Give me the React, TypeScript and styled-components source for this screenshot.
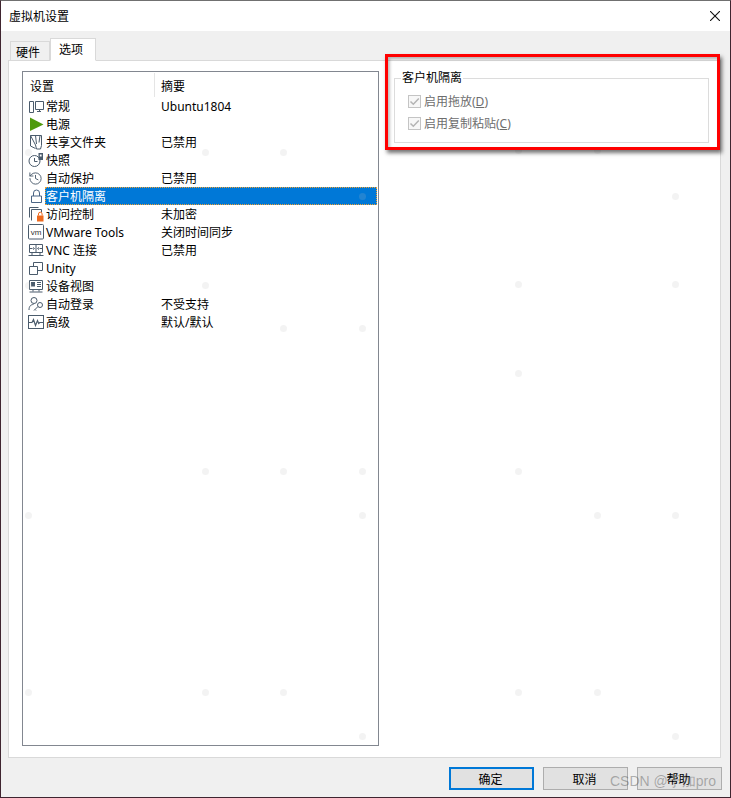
import React from "react";
import styled, { createGlobalStyle } from "styled-components";
import { History } from "lucide-react";

const GlobalStyle = createGlobalStyle`
  html, body {
    margin: 0;
    padding: 0;
    background: #fff;
  }
  * {
    box-sizing: border-box;
  }
`;

const ICON = "#4a5b6c";

const Window = styled.div`
  position: relative;
  width: 731px;
  height: 798px;
  display: flex;
  flex-direction: column;
  overflow: hidden;
  background: #f0f0f0;
  color: #000;
  font-family: "Noto Sans", "Noto Sans CJK SC", sans-serif;
  font-size: 12px;
  border: 1px solid #3f2530;
  border-top-color: #707070;
`;

const TitleBar = styled.div`
  height: 30px;
  flex: none;
  background: #fff;
  display: flex;
  align-items: center;
  justify-content: space-between;
  padding: 0 10px 1px 8px;
`;

const Body = styled.div`
  flex: 1;
  min-height: 0;
  display: flex;
  flex-direction: column;
  padding: 7px 9px 0 7px;
`;

const TabStrip = styled.div`
  height: 23px;
  flex: none;
  display: flex;
  align-items: flex-end;
  padding-left: 2px;
  margin-bottom: -1px;
  position: relative;
  z-index: 1;
`;

const Tab = styled.div<{ $active?: boolean }>`
  height: ${(p) => (p.$active ? "23px" : "20px")};
  width: ${(p) => (p.$active ? "46px" : "40px")};
  display: flex;
  align-items: center;
  justify-content: center;
  padding: ${(p) => (p.$active ? "0 4px 2px 0" : "1px 4px 0 0")};
  background: ${(p) => (p.$active ? "#fff" : "#f0f0f0")};
  border: 1px solid #d9d9d9;
  border-bottom-color: ${(p) => (p.$active ? "#fff" : "#d9d9d9")};
`;

const Panel = styled.div`
  flex: 1;
  min-height: 0;
  display: flex;
  align-items: flex-start;
  gap: 15px;
  background: #fff;
  border: 1px solid #d9d9d9;
  padding: 10px 10px 11px 13px;
`;

const SettingsList = styled.div`
  width: 357px;
  align-self: stretch;
  flex: none;
  border: 1px solid #828790;
  background: #fff;
  padding-top: 1px;
`;

const ListHeader = styled.div`
  height: 24px;
  display: flex;
`;

const HeaderCell = styled.div<{ $width?: number }>`
  width: ${(p) => (p.$width ? `${p.$width}px` : "auto")};
  flex: ${(p) => (p.$width ? "none" : "1")};
  display: flex;
  align-items: center;
  padding-left: ${(p) => (p.$width ? "7px" : "6px")};
  padding-top: 1px;
  border-right: ${(p) => (p.$width ? "1px solid #e5e5e5" : "none")};
`;

const Row = styled.div`
  height: 18px;
  display: flex;
  align-items: center;
  padding: 0 1px 0 5px;
`;

const RowIcon = styled.span`
  width: 17px;
  height: 16px;
  flex: none;
  display: flex;
  align-items: center;
  justify-content: flex-start;
`;

const RowBody = styled.div<{ $selected?: boolean }>`
  flex: 1;
  height: 18px;
  display: flex;
  align-items: center;
  background: ${(p) => (p.$selected ? "#0078d7" : "transparent")};
  color: ${(p) => (p.$selected ? "#fff" : "#000")};
  outline: ${(p) => (p.$selected ? "1px dotted #f0a030" : "none")};
  outline-offset: -1px;
`;

const RowName = styled.span`
  width: 116px;
  flex: none;
  padding-left: 1px;
  white-space: nowrap;
`;

const RowSummary = styled.span`
  white-space: nowrap;
`;

const GroupBox = styled.fieldset`
  width: 315px;
  height: 72px;
  flex: none;
  margin: 0;
  padding: 5px 0 0 13px;
  border: 1px solid #dcdcdc;
  display: block;
`;

const GroupLegend = styled.legend`
  margin-left: -7px;
  padding: 0 1px;
  line-height: 14px;
  font-size: 12px;
`;

const CheckRow = styled.div`
  height: 22px;
  display: flex;
  align-items: center;
  gap: 3px;
  color: #6d6d6d;
`;

const CheckBox = styled.span`
  width: 13px;
  height: 13px;
  flex: none;
  border: 1px solid #c4c4c4;
  background: #f7f7f7;
  display: flex;
  align-items: center;
  justify-content: center;
`;

const Accel = styled.span`
  text-decoration: underline;
`;

const Footer = styled.div`
  height: 39px;
  flex: none;
  display: flex;
  justify-content: flex-end;
  align-items: flex-start;
  gap: 9px;
  padding: 9px 8px 0 0;
`;

const Button = styled.button<{ $primary?: boolean }>`
  width: 85px;
  height: 23px;
  padding: 1px 2px 0 0;
  font: inherit;
  color: #000;
  background: #e1e1e1;
  border: ${(p) => (p.$primary ? "2px solid #0078d7" : "1px solid #adadad")};
`;

const Highlight = styled.div`
  position: absolute;
  left: 385px;
  top: 54px;
  width: 335px;
  height: 96px;
  border: 3px solid #ff0000;
  box-shadow: 2px 3px 4px rgba(0, 0, 0, 0.55), inset 2px 2px 3px rgba(0, 0, 0, 0.25);
  pointer-events: none;
`;

const Watermark = styled.div`
  position: absolute;
  left: 610px;
  top: 772px;
  font-family: "Liberation Sans", sans-serif;
  font-size: 14px;
  line-height: 18px;
  white-space: nowrap;
  color: rgba(90, 90, 90, 0.45);
  pointer-events: none;
`;

const Dot = styled.i`
  position: absolute;
  width: 7px;
  height: 7px;
  border-radius: 50%;
  background: rgba(190, 190, 190, 0.18);
  pointer-events: none;
`;

const Svg = ({ children }: { children: React.ReactNode }) => (
  <svg width="16" height="16" viewBox="0 0 16 16" fill="none" stroke={ICON} strokeWidth="1">
    {children}
  </svg>
);

const GeneralIcon = () => (
  <Svg>
    <path d="M1.5 3.5h4v11h-4zM7.5 3.5h8v8h-8zM9 13.5h4M11.5 11.5v2" />
  </Svg>
);

const PowerIcon = () => (
  <Svg>
    <path d="M2 1.5L15.5 8.5L2 15z" fill="#4f9a0c" stroke="none" />
  </Svg>
);

const FolderIcon = () => (
  <Svg>
    <path d="M2.5 1.5h11v10l-1 3.5h-4l-1-4zM2.5 1.5v10.5l5 2.5M7.5 1.5l1 8.5M12 1.5l-1 7" />
  </Svg>
);

const SnapshotIcon = () => (
  <Svg>
    <circle cx="6.5" cy="9" r="5.5" />
    <path d="M6.5 6v3.5h3" />
    <rect x="10.5" y="1" width="4.5" height="7" fill={ICON} stroke="none" />
    <rect x="11.8" y="2.5" width="1.8" height="2" fill="#fff" stroke="none" />
  </Svg>
);

const LockIcon = () => (
  <Svg>
    <path d="M3.5 8h10v6.5h-10zM5.5 8V5a3 3 0 0 1 6 0v3" stroke="#4b6585" />
  </Svg>
);

const AccessIcon = () => (
  <Svg>
    <path d="M1.5 11.5v-10h9M3.5 14.5v-11h10v3" />
    <rect x="9" y="9.5" width="6.5" height="6" fill="#ee6a1f" stroke="none" />
    <path d="M10.5 9.5V8a1.8 1.8 0 0 1 3.6 0v1.5" stroke="#ee6a1f" />
  </Svg>
);

const VmIcon = () => (
  <Svg>
    <rect x="0.5" y="0.5" width="15" height="14.5" rx="1" />
    <text x="8" y="10.5" textAnchor="middle" fontSize="8" stroke="none" fill="#333" fontFamily="Liberation Sans">
      vm
    </text>
  </Svg>
);

const VncIcon = () => (
  <Svg>
    <path d="M1.5 2.5h13v8h-13zM0.5 13.5h15M8 2.5v8M1.5 6.5h3M11.5 6.5h3M5 5.5l1.5 1-1.5 1M11 5.5l-1.5 1 1.5 1M4 10.5v3M12 10.5v3" />
  </Svg>
);

const UnityIcon = () => (
  <Svg>
    <path d="M1.5 6.5h8v8h-8zM5.5 6.5v-4h9v8h-5" />
  </Svg>
);

const DeviceIcon = () => (
  <Svg>
    <path d="M1.5 2.5h13v9h-13zM5 11.5v2M11 11.5v2M1.5 14h13" />
    <rect x="3" y="4" width="4" height="4.5" fill={ICON} stroke="none" />
    <path d="M9 4.5h4M9 6.5h4M9 8.5h4" />
  </Svg>
);

const LoginIcon = () => (
  <Svg>
    <circle cx="6" cy="4.5" r="3" />
    <path d="M1 14c0-4 2-5.5 4.5-5.5" />
    <circle cx="12" cy="9" r="2.5" />
    <path d="M10 10.5l-4 4M7 13.5l1 1" />
  </Svg>
);

const AdvancedIcon = () => (
  <Svg>
    <rect x="0.5" y="1.5" width="15" height="13" />
    <path d="M1 8.5h3l1.5-3 2 6 2-5 1.2 3 1-1h3.5" strokeWidth="1.2" />
  </Svg>
);

const HistoryIcon = () => <History size={15} color={ICON} strokeWidth={1.5} />;

const CloseIcon = () => (
  <svg width="10" height="10" viewBox="0 0 10 10" stroke="#111" strokeWidth="1.1">
    <path d="M0 0L10 10M10 0L0 10" />
  </svg>
);

const CheckMark = () => (
  <svg width="11" height="11" viewBox="0 0 11 11" fill="none" stroke="#b4b4b4" strokeWidth="1.5">
    <path d="M1.5 5.5L4.3 8.3L9.8 2.5" />
  </svg>
);

const rows: { icon: React.ReactNode; name: string; summary?: string; selected?: boolean }[] = [
  { icon: <GeneralIcon />, name: "常规", summary: "Ubuntu1804" },
  { icon: <PowerIcon />, name: "电源" },
  { icon: <FolderIcon />, name: "共享文件夹", summary: "已禁用" },
  { icon: <SnapshotIcon />, name: "快照" },
  { icon: <HistoryIcon />, name: "自动保护", summary: "已禁用" },
  { icon: <LockIcon />, name: "客户机隔离", selected: true },
  { icon: <AccessIcon />, name: "访问控制", summary: "未加密" },
  { icon: <VmIcon />, name: "VMware Tools", summary: "关闭时间同步" },
  { icon: <VncIcon />, name: "VNC 连接", summary: "已禁用" },
  { icon: <UnityIcon />, name: "Unity" },
  { icon: <DeviceIcon />, name: "设备视图" },
  { icon: <LoginIcon />, name: "自动登录", summary: "不受支持" },
  { icon: <AdvancedIcon />, name: "高级", summary: "默认/默认" },
];

// faint image watermark dots scattered over the screenshot
const dots: [number, number][] = [
  [28, 152], [205, 152], [283, 152], [518, 150], [597, 150],
  [362, 196], [675, 196],
  [28, 285], [205, 285], [518, 284], [675, 284],
  [283, 328], [362, 328],
  [518, 373],
  [205, 471], [283, 471], [362, 471], [518, 471],
  [28, 515], [362, 515], [597, 515], [675, 515],
  [28, 692], [205, 692], [283, 692], [518, 692], [597, 692],
  [362, 736], [675, 736],
];

export default function App() {
  return (
    <>
      <GlobalStyle />
      <Window>
        <TitleBar>
          <span>虚拟机设置</span>
          <CloseIcon />
        </TitleBar>
        <Body>
          <TabStrip>
            <Tab>硬件</Tab>
            <Tab $active>选项</Tab>
          </TabStrip>
          <Panel>
            <SettingsList>
              <ListHeader>
                <HeaderCell $width={132}>设置</HeaderCell>
                <HeaderCell>摘要</HeaderCell>
              </ListHeader>
              {rows.map((row) => (
                <Row key={row.name}>
                  <RowIcon>{row.icon}</RowIcon>
                  <RowBody $selected={row.selected}>
                    <RowName>{row.name}</RowName>
                    <RowSummary>{row.summary}</RowSummary>
                  </RowBody>
                </Row>
              ))}
            </SettingsList>
            <GroupBox>
              <GroupLegend>客户机隔离</GroupLegend>
              <CheckRow>
                <CheckBox>
                  <CheckMark />
                </CheckBox>
                <span>
                  启用拖放(<Accel>D</Accel>)
                </span>
              </CheckRow>
              <CheckRow>
                <CheckBox>
                  <CheckMark />
                </CheckBox>
                <span>
                  启用复制粘贴(<Accel>C</Accel>)
                </span>
              </CheckRow>
            </GroupBox>
          </Panel>
        </Body>
        <Footer>
          <Button $primary>确定</Button>
          <Button>取消</Button>
          <Button>帮助</Button>
        </Footer>
      </Window>
      {dots.map(([x, y]) => (
        <Dot key={`${x}-${y}`} style={{ left: x - 3, top: y - 3 }} />
      ))}
      <Highlight />
      <Watermark>CSDN @于加pro</Watermark>
    </>
  );
}
